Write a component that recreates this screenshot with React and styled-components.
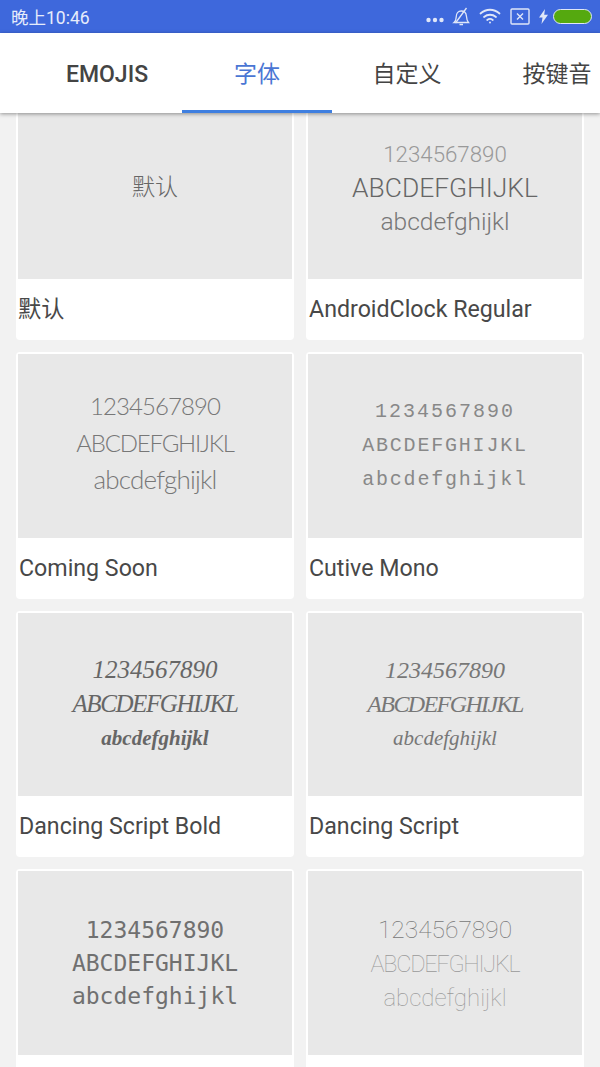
import React from "react";
import styled, { createGlobalStyle } from "styled-components";

const GlobalStyle = createGlobalStyle`
  html, body {
    margin: 0;
    padding: 0;
    height: 100%;
    overflow: hidden;
    background: #f2f2f2;
    font-family: Roboto, "Noto Sans CJK SC", sans-serif;
  }
`;

const Screen = styled.div`
  width: 600px;
  height: 1067px;
  display: flex;
  flex-direction: column;
  overflow: hidden;
`;

const StatusBar = styled.div`
  height: 33px;
  flex-shrink: 0;
  padding: 0 8px 1px 11px;
  box-sizing: border-box;
  display: flex;
  align-items: center;
  justify-content: space-between;
  background: #3e68dc;
  color: #e6ecfb;
  font-size: 17.5px;
`;

const StatusIcons = styled.div`
  display: flex;
  align-items: center;
`;

const Icon = styled.svg`
  display: block;
  margin-left: ${({ $gap }) => $gap || 0}px;
  margin-top: ${({ $top }) => $top || 0}px;
`;

const TabBar = styled.div`
  height: 80px;
  flex-shrink: 0;
  padding-left: 32px;
  display: flex;
  background: #fff;
  box-shadow: 0 1px 4px rgba(0, 0, 0, 0.4);
  position: relative;
  z-index: 1;
`;

const Tab = styled.div`
  width: 150px;
  flex-shrink: 0;
  box-sizing: border-box;
  display: flex;
  align-items: center;
  justify-content: center;
  padding-top: ${({ $bold }) => ($bold ? 6 : 0)}px;
  border-bottom: 3px solid ${({ $active }) => ($active ? "#3f7fe0" : "transparent")};
  color: ${({ $active }) => ($active ? "#4a76d4" : "#444")};
  font-size: 23px;
  font-weight: ${({ $bold }) => ($bold ? 500 : 400)};
  white-space: nowrap;
`;

const List = styled.div`
  flex: 1;
  overflow: hidden;
`;

const Grid = styled.div`
  margin-top: -19.5px;
  padding: 0 16px;
  display: grid;
  grid-template-columns: 278px 278px;
  column-gap: 12px;
  row-gap: 12px;
`;

const Card = styled.div`
  height: 246.5px;
  box-sizing: border-box;
  padding: 2px 2px 0;
  background: #fff;
  border-radius: 4px;
`;

const Preview = styled.div`
  height: 183.5px;
  box-sizing: border-box;
  padding-top: ${({ $down }) => $down || 0}px;
  padding-bottom: ${({ $up }) => $up || 0}px;
  display: flex;
  flex-direction: column;
  align-items: center;
  justify-content: center;
  background: #e8e8e8;
  white-space: nowrap;
`;

const Sample = styled.div`
  font-family: ${({ $font }) => $font};
  font-size: ${({ $size }) => $size}px;
  font-style: ${({ $italic }) => ($italic ? "italic" : "normal")};
  font-weight: ${({ $weight }) => $weight || 400};
  letter-spacing: ${({ $spacing }) => $spacing || 0}px;
  line-height: ${({ $line }) => $line}px;
  color: ${({ $color }) => $color};
`;

const Label = styled.div`
  height: 60px;
  box-sizing: border-box;
  padding-left: ${({ $cjk }) => ($cjk ? 0 : 1)}px;
  padding-bottom: ${({ $cjk }) => ($cjk ? 5 : 0)}px;
  display: flex;
  align-items: center;
  font-size: 23.2px;
  color: #484848;
  white-space: nowrap;
`;

const Battery = styled.div`
  width: 39px;
  height: 15px;
  margin-left: 5px;
  box-sizing: border-box;
  border: 1.5px solid #dfe6f8;
  border-radius: 8px;
  background: #55a90f;
`;

const cjk = '"Noto Sans CJK SC", sans-serif';
const roboto = "Roboto, sans-serif";
const light = "Lato, sans-serif";
const mono = '"Liberation Mono", monospace';
const code = '"DejaVu Sans Mono", monospace';
const script = '"Liberation Serif", serif';
const digits = "1234567890";
const upper = "ABCDEFGHIJKL";
const lower = "abcdefghijkl";

const fonts = [
  {
    name: "默认",
    isCjk: true,
    up: 4,
    lines: [{ text: "默认", font: cjk, size: 23, line: 30, color: "#666", weight: 300 }],
  },
  {
    name: "AndroidClock Regular",
    down: 2,
    lines: [
      { text: digits, font: roboto, size: 22.3, line: 33, color: "#999", weight: 300 },
      { text: upper, font: roboto, size: 26.4, line: 34, color: "#666", weight: 300 },
      { text: lower, font: roboto, size: 24.5, line: 34, color: "#777", weight: 300 },
    ],
  },
  {
    name: "Coming Soon",
    up: 6,
    lines: [
      { text: digits, font: light, size: 24, line: 37, color: "#777", weight: 300, spacing: -0.9 },
      { text: upper, font: light, size: 24, line: 37, color: "#777", weight: 300, spacing: -1.2 },
      { text: lower, font: light, size: 26, line: 37, color: "#777", weight: 300, spacing: -0.8 },
    ],
  },
  {
    name: "Cutive Mono",
    lines: [
      { text: digits, font: mono, size: 20, line: 34, color: "#888", spacing: 2 },
      { text: upper, font: mono, size: 20, line: 34, color: "#888", spacing: 1.8 },
      { text: lower, font: mono, size: 20, line: 34, color: "#888", spacing: 1.8 },
    ],
  },
  {
    name: "Dancing Script Bold",
    lines: [
      { text: digits, font: script, size: 25, line: 34, color: "#666", italic: true },
      { text: upper, font: script, size: 25, line: 34, color: "#666", italic: true, spacing: -1.4 },
      { text: lower, font: script, size: 21, line: 34, color: "#666", italic: true, weight: 700 },
    ],
  },
  {
    name: "Dancing Script",
    lines: [
      { text: digits, font: script, size: 24, line: 34, color: "#777", italic: true },
      { text: upper, font: script, size: 24, line: 34, color: "#777", italic: true, spacing: -1.6 },
      { text: lower, font: script, size: 21, line: 34, color: "#777", italic: true },
    ],
  },
  {
    name: "",
    down: 2,
    lines: [
      { text: digits, font: code, size: 23, line: 33, color: "#707070" },
      { text: upper, font: code, size: 23, line: 33, color: "#707070" },
      { text: lower, font: code, size: 23, line: 33, color: "#707070" },
    ],
  },
  {
    name: "",
    down: 2,
    lines: [
      { text: digits, font: roboto, size: 24.5, line: 34, color: "#777", weight: 100 },
      { text: upper, font: roboto, size: 23.5, line: 34, color: "#999", weight: 100, spacing: -1.3 },
      { text: lower, font: roboto, size: 24, line: 34, color: "#999", weight: 100 },
    ],
  },
];

const StatusRight = () => (
  <StatusIcons>
    <Icon $top={8} width="18" height="6" viewBox="0 0 18 6" fill="#dfe6f8">
      <circle cx="2.500" cy="3" r="2.200" />
      <circle cx="9" cy="3" r="2.200" />
      <circle cx="15.500" cy="3" r="2.200" />
    </Icon>
    <Icon $gap={8} width="19" height="19" viewBox="0 0 19 19" fill="none" stroke="#dfe6f8" strokeWidth="1.3">
      <path d="M2 15.500c1.600-1.300 2.200-3 2.200-5.500 0-3.400 2-6 5-6s5 2 5.200 5c.2 3 .8 5 2.100 6.500z" />
      <path d="M7.500 17.500h3.500M3.500 16 14.500 1" />
    </Icon>
    <Icon $gap={8} width="22" height="16" viewBox="0 0 22 16" fill="none" stroke="#dfe6f8" strokeWidth="1.8" strokeLinecap="round">
      <path d="M1.500 5.500c5.500-5 13.500-5 19 0" />
      <path d="M5 9c3.500-3 8.500-3 12 0" />
      <path d="M8.200 12c1.700-1.300 3.900-1.300 5.600 0" />
      <circle cx="11" cy="14.500" r="1" fill="#dfe6f8" stroke="none" />
    </Icon>
    <Icon $gap={9} width="20" height="17" viewBox="0 0 20 17" fill="none" stroke="#dfe6f8" strokeWidth="1.400">
      <rect x="1" y="1" width="18" height="15" rx="1" />
      <path d="M7 5.500 13 11.500M13 5.500 7 11.500" />
    </Icon>
    <Icon $gap={9} width="9" height="15" viewBox="0 0 9 15" fill="#dfe6f8">
      <path d="M6 0 0 8.500h3.500L2.500 15 9 5.800H5.200z" />
    </Icon>
    <Battery />
  </StatusIcons>
);

const App = () => (
  <Screen>
    <GlobalStyle />
    <StatusBar>
      <span>晚上10:46</span>
      <StatusRight />
    </StatusBar>
    <TabBar>
      <Tab $bold>EMOJIS</Tab>
      <Tab $active>字体</Tab>
      <Tab>自定义</Tab>
      <Tab>按键音</Tab>
    </TabBar>
    <List>
      <Grid>
        {fonts.map((item, i) => (
          <Card key={i}>
            <Preview $down={item.down} $up={item.up}>
              {item.lines.map((l) => (
                <Sample
                  key={l.text}
                  $font={l.font}
                  $size={l.size}
                  $line={l.line}
                  $color={l.color}
                  $weight={l.weight}
                  $italic={l.italic}
                  $spacing={l.spacing}
                >
                  {l.text}
                </Sample>
              ))}
            </Preview>
            <Label $cjk={item.isCjk}>{item.name}</Label>
          </Card>
        ))}
      </Grid>
    </List>
  </Screen>
);

export default App;
